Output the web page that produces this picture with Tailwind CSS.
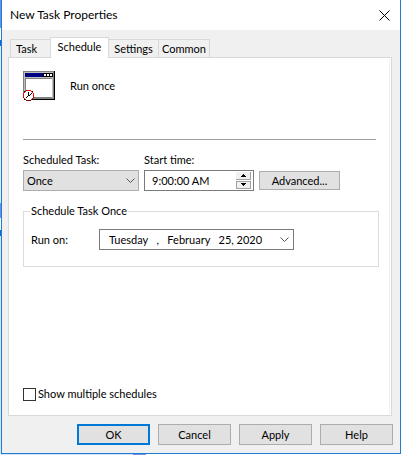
<!DOCTYPE html>
<html lang="en">
<head>
    <meta charset="UTF-8">
    <meta name="viewport" content="width=device-width, initial-scale=1.0">
    <title>New Task Properties</title>
    <script src="https://cdn.jsdelivr.net/npm/@tailwindcss/browser@4"></script>
</head>
<body class="min-h-screen grid grid-cols-[1px_1fr] grid-rows-[1fr_1px] bg-[#d9e2f8] text-[11px] leading-4 text-black font-['Lato',sans-serif]">
    <!-- sliver of the desktop left of the window -->
    <div class="row-span-2 flex flex-col">
        <div class="h-7 bg-[#6f8fe6]"></div>
        <div class="h-3 bg-white"></div>
        <div class="h-[6px] bg-[#1a66d0]"></div>
        <div class="h-[157px] bg-[#e3eafa]"></div>
        <div class="h-[15px] bg-[#6f8fe6]"></div>
        <div class="h-3 bg-white"></div>
        <div class="h-[6px] bg-[#1a66d0]"></div>
    </div>

    <main class="flex flex-col bg-[#f0f0f0] border-x border-b border-[#1a7fd4]">
        <header class="h-[30px] flex items-center justify-between bg-white pl-2 pr-[10px]">
            <h1 class="text-xs">New Task Properties</h1>
            <button type="button" aria-label="Close">
                <svg class="size-[11px]" viewBox="0 0 11 11" fill="none" stroke="#000"><path d="M.5.5l10 10M10.5.5l-10 10"/></svg>
            </button>
        </header>

        <nav class="flex items-end pl-2 pt-[7px]" role="tablist">
            <button type="button" role="tab" class="w-10 h-[18px] pl-[5px] text-left border border-r-0 border-b-0 border-[#d9d9d9]">Task</button>
            <button type="button" role="tab" aria-selected="true" class="relative w-[59px] h-[21px] -mb-px pb-[2px] bg-white border border-b-0 border-[#d9d9d9]">Schedule</button>
            <button type="button" role="tab" class="w-[49px] h-[18px] border border-x-0 border-b-0 border-[#d9d9d9]">Settings</button>
            <button type="button" role="tab" class="w-[52px] h-[18px] border border-b-0 border-[#d9d9d9]">Common</button>
        </nav>

        <section class="grow flex ml-[6px] mr-2 bg-white border border-[#d9d9d9] pr-px py-px">
            <div class="grow flex flex-col border-r border-[#f0f0f0] pl-[14px] pr-[10px] py-3">
                <div class="flex items-center gap-[15px]">
                    <svg class="w-8 h-[30px]" viewBox="0 0 32 30" shape-rendering="crispEdges">
                        <path fill="#000" d="M0 0h32v29H0z"/>
                        <path fill="#808080" d="M0 0h31v28H0z"/>
                        <path fill="#c0c0c0" d="M1 1h29v26H1z"/>
                        <path fill="#000080" d="M2 2h28v4H2z"/>
                        <path fill="#000" d="M20 2h10v4H20z"/>
                        <path fill="#fff" d="M21 3h2v2h-2zM24 3h2v2h-2zM27 3h2v2h-2z"/>
                        <path fill="#808080" d="M2 7h27v20H2z"/>
                        <path fill="#fff" d="M3 8h26v18H3z"/>
                        <path fill="#fff" d="M0 26h2v4H0zM0 29h11v1H0z"/>
                        <path fill="#800000" d="M3 19h5v1h1v1h1v1h1v5h-1v1H9v1H8v1H3v-1H2v-1H1v-1H0v-5h1v-1h1v-1h1z"/>
                        <path fill="#f00" d="M4 19h4v1h2v2h1v4h-1v2H8v1H3v-1H1v-2H0v-4h1v-2h2z"/>
                        <path fill="#fff" d="M3 20h5v1h1v1h1v5H9v1H8v1H3v-1H2v-1H1v-5h1v-1h1z"/>
                        <path fill="#000" d="M5 21h1v4H5zM6 24h1v1H6zM7 23h1v1H7zM8 22h1v1H8zM4 25h1v1H4zM3 26h1v1H3zM1 20h1v1H1zM9 20h1v1H9zM1 28h1v1H1zM9 28h1v1H9z"/>
                    </svg>
                    <p>Run once</p>
                </div>
                <hr class="mt-[38px] border-[#a0a0a0] mr-[3px]">

                <div class="flex items-end gap-[5px] mt-3">
                    <div class="w-[116px]">
                        <label for="kind" class="block mb-[2px]">Scheduled Task:</label>
                        <div class="relative">
                            <select id="kind" class="appearance-none block w-full h-[21px] pl-[3px] bg-[#e1e1e1] border border-[#adadad]">
                                <option>Once</option>
                                <option>Daily</option>
                                <option>Weekly</option>
                            </select>
                            <svg class="absolute right-1 top-2 w-[9px] h-[5px] pointer-events-none" viewBox="0 0 9 5" fill="none" stroke="#555"><path d="M.5.5l4 4 4-4"/></svg>
                        </div>
                    </div>
                    <div class="w-[110px]">
                        <label for="time" class="block mb-[2px]">Start time:</label>
                        <div class="h-[21px] flex items-center border border-[#7a7a7a] bg-white pl-[7px] pr-[2px]">
                            <input id="time" type="text" value="9:00:00 AM" class="grow min-w-0 outline-none">
                            <div class="flex flex-col gap-px">
                                <button type="button" aria-label="Later" class="w-[15px] h-2 bg-[#f0f0f0] border-r border-b border-[#a0a0a0]">
                                    <svg class="w-[14px] h-[7px]" viewBox="0 0 14 7" shape-rendering="crispEdges"><path d="M7 2h1v1h1v1h1v1H5V4h1V3h1z"/></svg>
                                </button>
                                <button type="button" aria-label="Earlier" class="w-[15px] h-2 bg-[#f0f0f0] border border-[#a0a0a0]">
                                    <svg class="w-[13px] h-[6px]" viewBox="0 0 13 6" shape-rendering="crispEdges"><path d="M4 1h5v1H8v1H7v1H6V3H5V2H4z"/></svg>
                                </button>
                            </div>
                        </div>
                    </div>
                    <button type="button" class="w-[81px] h-[19px] mb-px bg-[#e1e1e1] border border-[#adadad] flex items-center justify-center">Advanced...</button>
                </div>

                <fieldset class="mt-3 border border-[#dcdcdc] pl-[7px] pb-4">
                    <legend class="px-px ml-[-1px]">Schedule Task Once</legend>
                    <div class="flex items-center pt-[10px]">
                        <label for="date" class="w-[68px]">Run on:</label>
                        <div class="w-[195px] h-[21px] flex items-center border border-[#7a7a7a] bg-white pl-[9px] pr-1">
                            <input id="date" type="text" value="Tuesday   ,   February   25, 2020" class="grow min-w-0 outline-none">
                            <button type="button" aria-label="Open calendar">
                                <svg class="w-[9px] h-[5px]" viewBox="0 0 9 5" fill="none" stroke="#555"><path d="M.5.5l4 4 4-4"/></svg>
                            </button>
                        </div>
                    </div>
                </fieldset>

                <label class="flex items-center gap-[2px] mt-auto">
                    <input type="checkbox" class="appearance-none size-[13px] bg-white border border-[#333]">
                    Show multiple schedules
                </label>
            </div>
        </section>

        <footer class="flex justify-end gap-2 pt-2 pb-2 pr-[7px]">
            <button type="button" class="w-[73px] h-[21px] bg-[#e1e1e1] border-2 border-[#0078d7] flex items-center justify-center">OK</button>
            <button type="button" class="w-[73px] h-[21px] bg-[#e1e1e1] border border-[#adadad] flex items-center justify-center">Cancel</button>
            <button type="button" class="w-[73px] h-[21px] bg-[#e1e1e1] border border-[#adadad] flex items-center justify-center">Apply</button>
            <button type="button" class="w-[73px] h-[21px] bg-[#e1e1e1] border border-[#adadad] flex items-center justify-center">Help</button>
        </footer>
    </main>

    <!-- and the line of it below -->
    <div class="flex">
        <div class="w-[132px]"></div>
        <div class="w-[13px] bg-[#6f8fe6]"></div>
        <div class="grow bg-white"></div>
    </div>
</body>
</html>
